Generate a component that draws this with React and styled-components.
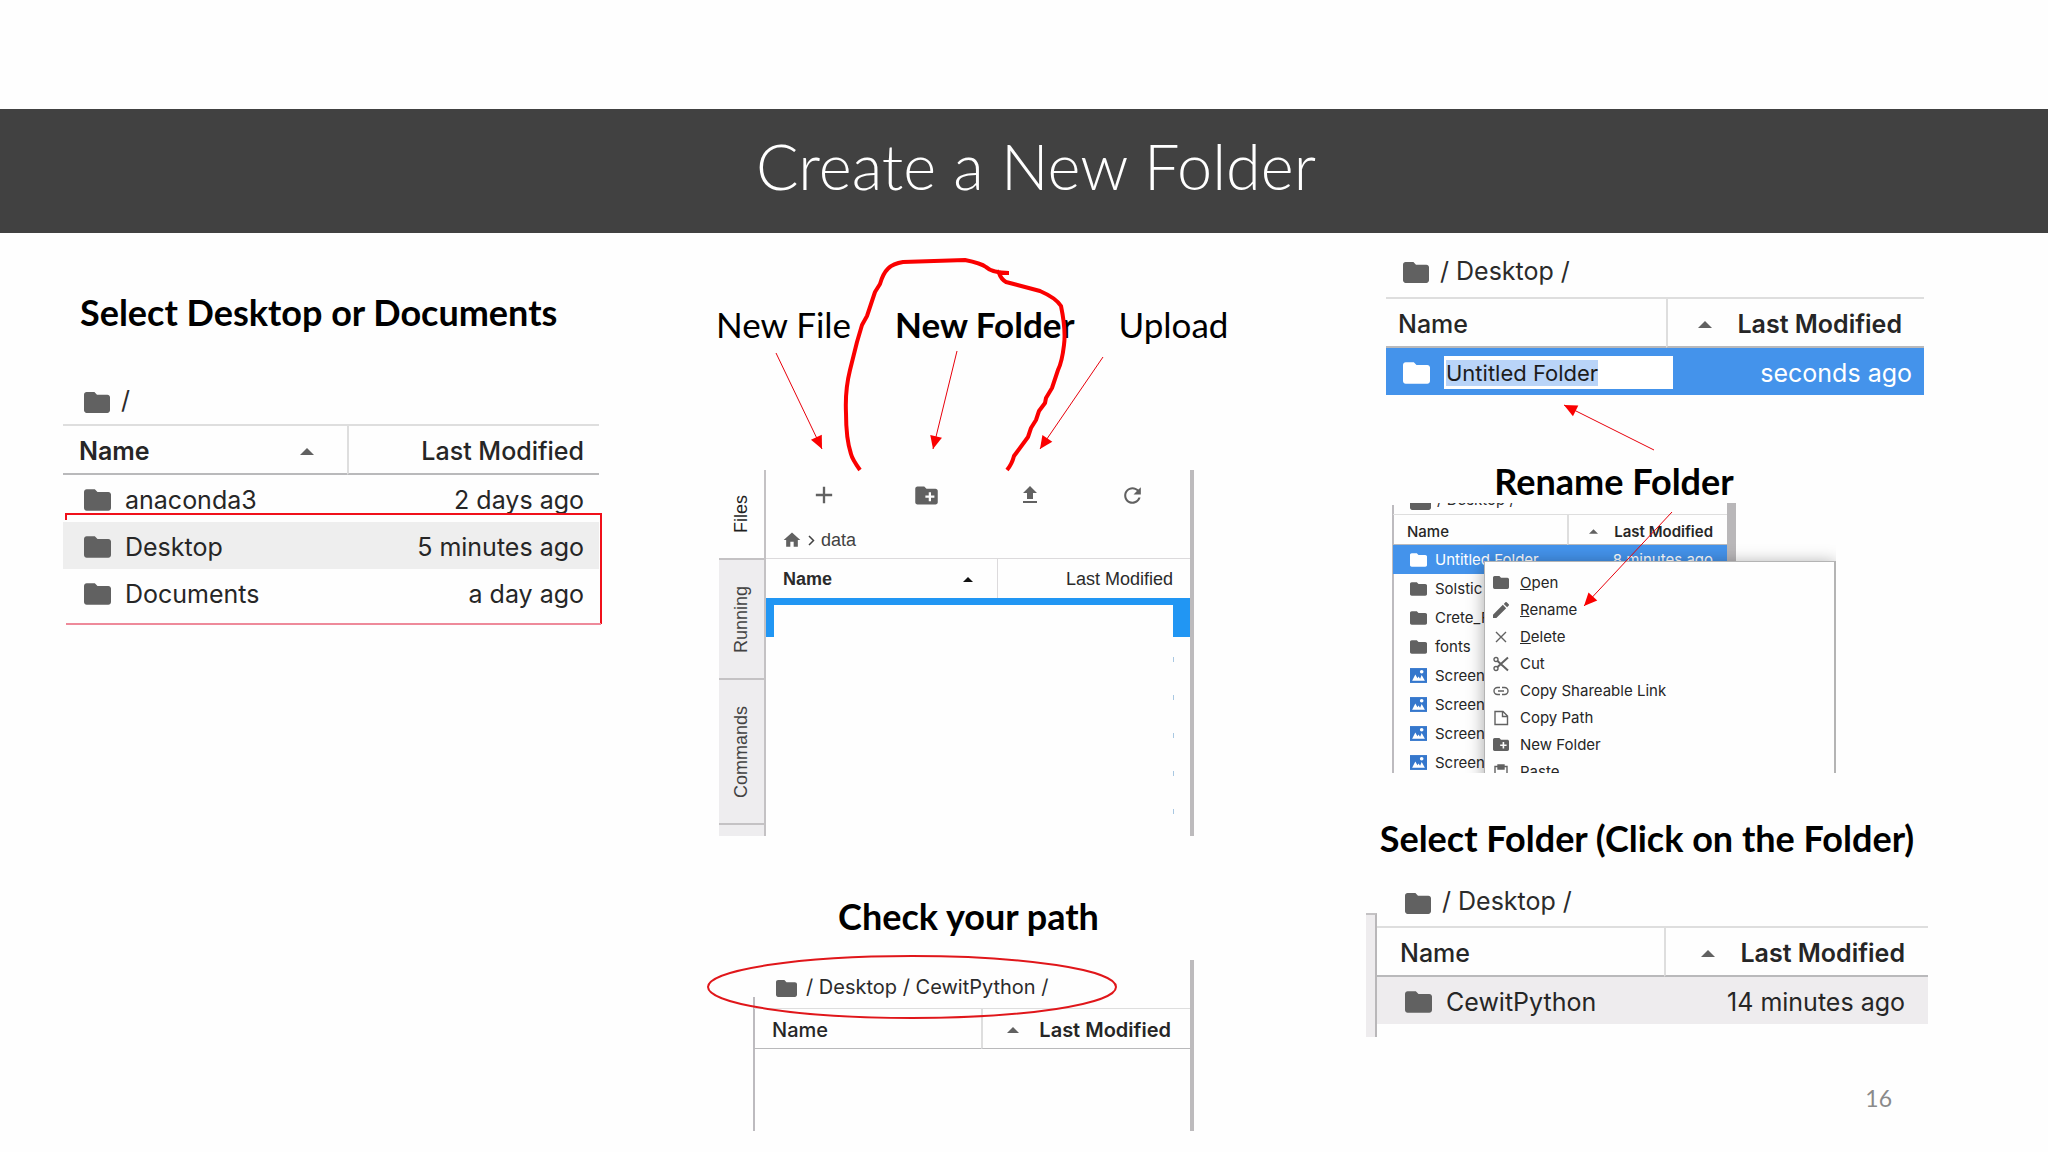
import { useEffect, useRef } from 'react';
import styled, { createGlobalStyle } from 'styled-components';

const GlobalStyle = createGlobalStyle`
    * {
        box-sizing: border-box;
    }
    body {
        margin: 0;
        background-color: #fefefe;
    }
`;

const slideFont = "Lato, 'Open Sans', sans-serif";
const uiFont = "Inter, 'Liberation Sans', sans-serif";
const oldUiFont = "'Liberation Sans', Arial, sans-serif";

const sizes = {
    large: { font: 25, head: 51, row: 47, pad: 2, icon: 27, gap: 14, line: 2, caret: 14, caretGap: 25 },
    medium: { font: 20, head: 41, row: 39, pad: 2, icon: 21, gap: 9, line: 1, caret: 12, caretGap: 20 },
    small: { font: 15, head: 31, row: 29, pad: 0, icon: 17, gap: 8, line: 1, caret: 9, caretGap: 16 },
};

const Slide = styled.div`
    padding-top: 109px;
    min-height: 100vh;
    font-family: ${slideFont};
    color: #000;
`;

const Banner = styled.header`
    height: 124px;
    padding: 0 0 10px 24px;
    display: flex;
    align-items: center;
    justify-content: center;
    background-color: #414141;
`;

const Title = styled.h1`
    margin: 0;
    font-size: 63px;
    font-weight: 300;
    line-height: 72px;
    color: #fff;
`;

const Columns = styled.main`
    display: grid;
    grid-template-columns: 540fr 523fr 594fr;
    column-gap: 104px;
    padding: 0 120px 0 63px;
`;

const Column = styled.section`
    position: relative;
    min-width: 0;
    padding-top: ${(props) => props.$top}px;
    padding-left: ${(props) => props.$left || 0}px;
`;

const Heading = styled.h2`
    margin: 0;
    padding-left: ${(props) => props.$left || 0}px;
    font-size: 36px;
    font-weight: 700;
    line-height: 44px;
    text-align: ${(props) => props.$align || 'left'};
    white-space: nowrap;
`;

const Marks = styled.svg`
    position: absolute;
    top: 0;
    left: 0;
    overflow: visible;
    pointer-events: none;
`;

const Labels = styled.div`
    display: flex;
    gap: 44px;
    padding-left: 9px;
`;

const Label = styled.span`
    font-size: 35px;
    font-weight: ${(props) => (props.$bold ? 700 : 400)};
    line-height: 44px;
    white-space: nowrap;
`;

const Crumbs = styled.nav`
    display: flex;
    align-items: center;
    gap: ${(props) => props.$gap}px;
    height: ${(props) => props.$height}px;
    padding-left: ${(props) => props.$left}px;
    font-family: ${uiFont};
    font-size: ${(props) => props.$font}px;
    color: #2b2b2b;
    white-space: nowrap;
`;

const CrumbText = styled.span`
    padding-bottom: 4px;
`;

const CrumbLink = styled.a`
    color: inherit;
    text-decoration: none;
`;

const Table = styled.table`
    width: 100%;
    table-layout: fixed;
    border-spacing: 0;
    font-family: ${uiFont};
    font-size: ${(props) => props.$size.font}px;
    color: #262626;
`;

const HeadCell = styled.th`
    width: ${(props) => props.$width || 'auto'};
    height: ${(props) => props.$size.head}px;
    padding: 3px ${(props) => props.$right || 0}px 0 ${(props) => props.$left || 0}px;
    border-top: ${(props) => props.$size.line}px solid #dedede;
    border-bottom: ${(props) => props.$size.line}px solid #b9b9bb;
    border-left: ${(props) => (props.$divided ? '2px solid #dedede' : 'none')};
    font-weight: ${(props) => (props.$bold ? 600 : 500)};
    white-space: nowrap;
`;

const HeadInner = styled.div`
    display: flex;
    align-items: center;
    justify-content: ${(props) => props.$justify};
    gap: ${(props) => props.$gap}px;
`;

const Row = styled.tr`
    background-color: ${(props) => props.$fill || 'transparent'};
    color: ${(props) => props.$color || 'inherit'};
`;

const Cell = styled.td`
    height: ${(props) => props.$size.row}px;
    padding: ${(props) => props.$size.pad}px ${(props) => props.$right || 0}px 0
        ${(props) => props.$left || 0}px;
    text-align: ${(props) => props.$align || 'left'};
    white-space: nowrap;
`;

const FileName = styled.div`
    display: flex;
    align-items: center;
    gap: ${(props) => props.$gap}px;

    svg {
        flex-shrink: 0;
    }
`;

const RenameInput = styled.input`
    width: 229px;
    height: 33px;
    padding: 0 2px;
    border: none;
    outline: none;
    background-color: #fff;
    font-family: ${uiFont};
    font-size: 22px;
    color: #1c1c1c;

    &::selection {
        background-color: #b9d4f8;
        color: #1c1c1c;
    }
`;

const HomePanel = styled.div`
    margin: 46px 4px 0 0;
`;

const LabPanel = styled.div`
    display: flex;
    height: 366px;
    margin: 124px 36px 58px 12px;
    border-right: 4px solid #bdbbbd;
    font-family: ${oldUiFont};
    font-size: 18px;
    color: #424242;
`;

const SideTabs = styled.div`
    display: flex;
    flex-direction: column;
    width: 47px;
    background-color: #eeedef;
    border-right: 2px solid #c4c2c4;
`;

// The half turn makes the top border of a tab its lower edge
const SideTab = styled.button`
    height: ${(props) => props.$height}px;
    padding: 0;
    display: flex;
    align-items: center;
    justify-content: center;
    border: none;
    border-top: 2px solid #c4c2c4;
    background-color: ${(props) => (props.$active ? '#fefefe' : 'transparent')};
    font: inherit;
    line-height: 45px;
    color: ${(props) => (props.$active ? '#1f1f1f' : '#424242')};
    writing-mode: vertical-rl;
    transform: rotate(180deg);
`;

const LabContent = styled.div`
    flex: 1;
    min-width: 0;
`;

const Toolbar = styled.div`
    display: grid;
    grid-template-columns: repeat(4, 1fr);
    height: 50px;
    padding: 0 6px;
`;

const ToolButton = styled.button`
    display: flex;
    align-items: center;
    justify-content: center;
    padding: 0;
    border: none;
    background: none;
    color: #616161;
`;

const LabCrumbs = styled.nav`
    display: flex;
    align-items: center;
    gap: 6px;
    height: 38px;
    padding: 2px 0 0 16px;
`;

const LabTable = styled.table`
    width: 100%;
    table-layout: fixed;
    border-spacing: 0;
`;

const LabHead = styled.th`
    width: ${(props) => props.$width || 'auto'};
    height: 40px;
    padding: 2px ${(props) => (props.$divided ? 17 : 24)}px 0 17px;
    border-top: 1px solid #dcdadc;
    border-left: ${(props) => (props.$divided ? '1px solid #dcdadc' : 'none')};
    font-weight: ${(props) => (props.$divided ? 400 : 700)};
    text-align: ${(props) => (props.$divided ? 'right' : 'left')};
    color: #2b2b2b;
`;

const SelectedRow = styled.div`
    height: 39px;
    border: solid #2196f3;
    border-width: 7px 17px 0 8px;
`;

const RowEdges = styled.div`
    display: flex;
    flex-direction: column;
    align-items: flex-end;
    gap: 33px;
    padding: 20px 16px 0 0;
`;

const RowEdge = styled.span`
    width: 1px;
    height: 5px;
    background-color: #a9c8e2;
`;

const PathPanel = styled.div`
    height: 171px;
    margin: 22px 36px 0 46px;
    padding: 9px 0 0 1px;
    border-right: 4px solid #bdbbbd;
    background: linear-gradient(#bdbbbf, #bdbbbf) left bottom / 2px 134px no-repeat;
`;

const RenamePanel = styled.div`
    margin: 0 4px 64px 20px;
`;

const ContextFigure = styled.div`
    margin: 0 92px 43px 26px;
`;

const ContextCrop = styled.div`
    position: relative;
    height: 270px;
    overflow: hidden;
`;

const ContextPanel = styled.div`
    height: 270px;
    margin-right: 100px;
    padding-left: 1px;
    overflow: hidden;
    border-right: 9px solid #b9b7b9;
    background: linear-gradient(#bdbbbf, #bdbbbf) left bottom / 2px 268px no-repeat;
`;

const ClippedCrumbs = styled.div`
    display: flex;
    align-items: flex-end;
    height: 11px;
    padding-bottom: 3px;
`;

const Menu = styled.ul`
    position: absolute;
    top: 58px;
    left: 92px;
    right: 0;
    height: 240px;
    margin: 0;
    padding: 7px 0 0;
    list-style: none;
    background-color: #fefefe;
    border: 1px solid #b4b4b4;
    border-right-width: 2px;
    box-shadow: 0 2px 16px rgba(0, 0, 0, 0.35);
`;

const MenuButton = styled.button`
    display: flex;
    align-items: center;
    gap: 11px;
    width: 100%;
    height: 27px;
    padding: 0 0 0 8px;
    border: none;
    background: none;
    font-family: ${uiFont};
    font-size: 15px;
    color: #262626;
    text-align: left;

    svg {
        color: #616161;
    }
`;

const FolderPanel = styled.div`
    display: flex;
    margin-top: 20px;
`;

const Gutter = styled.div`
    width: 11px;
    margin-top: 33px;
    background-color: #eeecee;
    border-top: 2px solid #c4c2c4;
    border-right: 2px solid #b9b7b9;
`;

const FolderContent = styled.div`
    flex: 1;
    min-width: 0;
    padding-bottom: 13px;
`;

const PageNumber = styled.footer`
    margin-top: 48px;
    padding-right: 36px;
    font-size: 23px;
    line-height: 26px;
    text-align: right;
    color: #8a8a8a;
`;

const FolderIcon = ({ width = 26, color = '#616161' }) => (
    <svg width={width} height={Math.round(width * 0.8)} viewBox='2 4 20 16' fill={color}>
        <path d='M10 4H4c-1.1 0-2 .9-2 2v12c0 1.1.9 2 2 2h16c1.1 0 2-.9 2-2V8c0-1.1-.9-2-2-2h-8l-2-2z' />
    </svg>
);

const ImageIcon = () => (
    <svg width='17' height='15' viewBox='0 0 16 14'>
        <path fill='#3577cc' d='M0 0h16v14H0z' />
        <path fill='#fff' d='M2 12l3-6 2 3.500 1-1.500 1.500 2L11 6.500 14 12z' />
        <circle cx='11' cy='3.500' r='1.700' fill='#fff' />
    </svg>
);

const Icon = ({ size, d }) => (
    <svg width={size} height={size} viewBox='0 0 24 24' fill='currentColor'>
        <path d={d} />
    </svg>
);

const LineIcon = ({ children }) => (
    <svg
        width='16'
        height='16'
        viewBox='0 0 16 16'
        fill='none'
        stroke='currentColor'
        strokeWidth='1.400'
    >
        {children}
    </svg>
);

const Caret = ({ width, color = '#616161' }) => (
    <svg width={width} height={Math.round(width / 2)} viewBox='0 0 14 7' fill={color}>
        <path d='M0 7L7 0l7 7z' />
    </svg>
);

const newFolderPath =
    'M20 6h-8l-2-2H4c-1.110 0-1.990.89-1.990 2L2 18c0 1.110.89 2 2 2h16c1.110 0 2-.89 2-2V8c0-1.110-.89-2-2-2zm-1 8h-3v3h-2v-3h-3v-2h3V9h2v3h3v2z';

const tools = [
    { name: 'New File', size: 28, d: 'M19 13h-6v6h-2v-6H5v-2h6V5h2v6h6v2z' },
    { name: 'New Folder', size: 27, d: newFolderPath },
    { name: 'Upload', size: 24, d: 'M9 16h6v-6h4l-7-7-7 7h4zm-4 2h14v2H5z' },
    {
        name: 'Refresh',
        size: 25,
        d: 'M17.650 6.350C16.200 4.900 14.210 4 12 4c-4.420 0-7.990 3.580-7.990 8s3.570 8 7.990 8c3.730 0 6.840-2.550 7.730-6h-2.080c-.82 2.330-3.040 4-5.650 4-3.310 0-6-2.690-6-6s2.690-6 6-6c1.660 0 3.140.69 4.220 1.780L13 11h7V4l-2.350 2.350z',
    },
];

const menuItems = [
    { key: 'O', text: 'pen', icon: <FolderIcon width={16} /> },
    {
        key: 'R',
        text: 'ename',
        icon: (
            <svg width='16' height='16' viewBox='3 3 18 18' fill='currentColor'>
                <path d='M3 17.250V21h3.750L17.810 9.940l-3.750-3.750L3 17.250zM20.710 7.040a1 1 0 0 0 0-1.410l-2.340-2.340a1 1 0 0 0-1.410 0l-1.830 1.830 3.750 3.750 1.830-1.830z' />
            </svg>
        ),
    },
    {
        key: 'D',
        text: 'elete',
        icon: (
            <LineIcon>
                <path d='M3 3l10 10M13 3L3 13' />
            </LineIcon>
        ),
    },
    {
        text: 'Cut',
        icon: (
            <LineIcon>
                <circle cx='3' cy='3.500' r='2' />
                <circle cx='3' cy='12.500' r='2' />
                <path d='M4.500 5L15 14.500M4.500 11L15 1.500' strokeWidth='2' />
            </LineIcon>
        ),
    },
    {
        text: 'Copy Shareable Link',
        icon: (
            <LineIcon>
                <path d='M7 4.500H4.500a3.500 3.500 0 0 0 0 7H7M9 4.500h2.500a3.500 3.500 0 0 1 0 7H9M5 8h6' />
            </LineIcon>
        ),
    },
    {
        text: 'Copy Path',
        icon: (
            <LineIcon>
                <path d='M2 1.500h8l4.500 4.500v8.500H2zM9.500 1.500v5h5' />
            </LineIcon>
        ),
    },
    {
        text: 'New Folder',
        icon: (
            <svg width='16' height='13' viewBox='2 4 20 16' fill='currentColor'>
                <path d={newFolderPath} />
            </svg>
        ),
    },
    {
        text: 'Paste',
        icon: (
            <LineIcon>
                <path d='M2 2.500h12V15H2z' />
                <path d='M5 1h6v4H5z' fill='currentColor' />
            </LineIcon>
        ),
    },
];

const contextRows = ['Solstic', 'Crete_F', 'fonts'];
const imageRows = [1, 2, 3, 4];

// Line from (x1, y1) ending in a solid head whose tip is at (x2, y2)
const Arrow = ({ x1, y1, x2, y2 }) => {
    const angle = (Math.atan2(y2 - y1, x2 - x1) * 180) / Math.PI;
    return (
        <g stroke='#e8000b' strokeWidth='1' fill='#fa0000'>
            <path d={`M${x1} ${y1}L${x2} ${y2}`} />
            <path
                d='M0 0L-13 -6L-13 6Z'
                stroke='none'
                transform={`translate(${x2} ${y2}) rotate(${angle})`}
            />
        </g>
    );
};

const TableHead = ({ size, split = '52%', left, right, sortByName }) => (
    <thead>
        <tr>
            <HeadCell
                $size={size}
                $width={split}
                $left={left}
                $right={sortByName ? 33 : 0}
                $bold={sortByName}
            >
                <HeadInner $justify='space-between'>
                    Name
                    {sortByName && <Caret width={size.caret} />}
                </HeadInner>
            </HeadCell>
            <HeadCell $size={size} $right={right} $bold={!sortByName} $divided>
                <HeadInner $justify='flex-end' $gap={size.caretGap}>
                    {!sortByName && <Caret width={size.caret} />}
                    Last Modified
                </HeadInner>
            </HeadCell>
        </tr>
    </thead>
);

const FileRow = ({ size, left, right, name, time, icon, fill, color }) => (
    <Row $fill={fill} $color={color}>
        <Cell $size={size} $left={left}>
            <FileName $gap={size.gap}>
                {icon || <FolderIcon width={size.icon} color={color} />}
                {name}
            </FileName>
        </Cell>
        <Cell $size={size} $right={right} $align='right'>
            {time}
        </Cell>
    </Row>
);

const Path = ({ parts, ...props }) => (
    <Crumbs {...props}>
        <FolderIcon width={props.$font > 20 ? 26 : 21} />
        <CrumbText>
            /{' '}
            {parts.map((part) => (
                <span key={part}>
                    <CrumbLink href='#'>{part}</CrumbLink> /{' '}
                </span>
            ))}
        </CrumbText>
    </Crumbs>
);

const App = () => {
    const nameInput = useRef(null);

    useEffect(() => {
        nameInput.current.focus();
        nameInput.current.select();
    }, []);

    const { large, medium, small } = sizes;

    return (
        <Slide>
            <GlobalStyle />
            <Banner>
                <Title>Create a New Folder</Title>
            </Banner>
            <Columns>
                <Column $top={57}>
                    <Heading $left={17}>Select Desktop or Documents</Heading>
                    <HomePanel>
                        <Path parts={[]} $font={25} $gap={11} $height={44} $left={21} />
                        <Table $size={large}>
                            <TableHead size={large} split='53%' left={16} right={15} sortByName />
                            <tbody>
                                <FileRow size={large} left={21} right={15} name='anaconda3' time='2 days ago' />
                                <FileRow
                                    size={large}
                                    left={21}
                                    right={15}
                                    name='Desktop'
                                    time='5 minutes ago'
                                    fill='#eeeeee'
                                />
                                <FileRow size={large} left={21} right={15} name='Documents' time='a day ago' />
                            </tbody>
                        </Table>
                    </HomePanel>
                    <Marks width='540' height='400' fill='none' strokeWidth='2'>
                        <path stroke='#f0101a' d='M3 287V281H538V391' />
                        <path stroke='#ee8a9a' d='M3 391H538' />
                    </Marks>
                </Column>

                <Column $top={69}>
                    <Labels>
                        <Label>New File</Label>
                        <Label $bold>New Folder</Label>
                        <Label>Upload</Label>
                    </Labels>
                    <LabPanel>
                        <SideTabs>
                            <SideTab $height={90} $active>Files</SideTab>
                            <SideTab $height={120}>Running</SideTab>
                            <SideTab $height={145}>Commands</SideTab>
                        </SideTabs>
                        <LabContent>
                            <Toolbar>
                                {tools.map((tool) => (
                                    <ToolButton key={tool.name} aria-label={tool.name}>
                                        <Icon size={tool.size} d={tool.d} />
                                    </ToolButton>
                                ))}
                            </Toolbar>
                            <LabCrumbs>
                                <svg width='20' height='20' viewBox='0 0 24 24' fill='#616161'>
                                    <path d='M10 20v-6h4v6h5v-8h3L12 3 2 12h3v8z' />
                                </svg>
                                <svg width='7' height='11' viewBox='0 0 7 11' fill='none' stroke='#424242' strokeWidth='1.500'>
                                    <path d='M1 1l4.500 4.500L1 10' />
                                </svg>
                                <CrumbLink href='#'>data</CrumbLink>
                            </LabCrumbs>
                            <LabTable>
                                <thead>
                                    <tr>
                                        <LabHead $width='231px'>
                                            <HeadInner $justify='space-between'>
                                                Name
                                                <Caret width={10} color='#111' />
                                            </HeadInner>
                                        </LabHead>
                                        <LabHead $divided>Last Modified</LabHead>
                                    </tr>
                                </thead>
                            </LabTable>
                            <SelectedRow />
                            <RowEdges>
                                <RowEdge />
                                <RowEdge />
                                <RowEdge />
                                <RowEdge />
                                <RowEdge />
                            </RowEdges>
                        </LabContent>
                    </LabPanel>
                    <Heading $align='center'>Check your path</Heading>
                    <PathPanel>
                        <Path
                            parts={['Desktop', 'CewitPython']}
                            $font={20}
                            $gap={9}
                            $height={39}
                            $left={22}
                        />
                        <Table $size={medium}>
                            <TableHead size={medium} left={18} right={19} />
                        </Table>
                    </PathPanel>
                    <Marks width='523' height='903' viewBox='707 233 523 903' fill='none'>
                        <path
                            stroke='#fa0000'
                            strokeWidth='4'
                            strokeLinejoin='round'
                            d='M860 470C855 463 852 458 851 454C848 445 846 430 846 413C845 392 848 378 850 370L857 342L862 325L867 316L875 292L880 284C884 270 890 264 903 262L965 260C975 262 982 264 986 267Q992 273 1009 273M997 271L999 273Q1001 279 1006 282L1040 291Q1056 298 1061 306Q1066 330 1064 345Q1062 362 1058 370L1052 388L1046 398L1045 403L1039 411L1036 420L1031 428L1028 437L1014 456Q1012 464 1007 470'
                        />
                        <Arrow x1={776} y1={353} x2={822} y2={449} />
                        <Arrow x1={957} y1={351} x2={933} y2={449} />
                        <Arrow x1={1103} y1={357} x2={1040} y2={449} />
                        <ellipse cx='912' cy='987' rx='204' ry='31' stroke='#e0161a' strokeWidth='2' />
                    </Marks>
                </Column>

                <Column $top={15} $left={32}>
                    <RenamePanel>
                        <Path parts={['Desktop']} $font={25} $gap={11} $height={49} $left={17} />
                        <Table $size={large}>
                            <TableHead size={large} left={12} right={22} />
                            <tbody>
                                <FileRow
                                    size={large}
                                    left={17}
                                    right={12}
                                    name={
                                        <RenameInput
                                            ref={nameInput}
                                            aria-label='Folder name'
                                            defaultValue='Untitled Folder'
                                        />
                                    }
                                    time='seconds ago'
                                    fill='#4493eb'
                                    color='#ffffff'
                                />
                            </tbody>
                        </Table>
                    </RenamePanel>
                    <ContextFigure>
                        <Heading $align='center'>Rename Folder</Heading>
                        <ContextCrop>
                            <ContextPanel>
                                <ClippedCrumbs>
                                    <Path parts={['Desktop']} $font={15} $gap={6} $height={20} $left={17} />
                                </ClippedCrumbs>
                                <Table $size={small}>
                                    <TableHead size={small} left={14} right={14} />
                                    <tbody>
                                        <FileRow
                                            size={small}
                                            left={17}
                                            right={14}
                                            name='Untitled Folder'
                                            time='8 minutes ago'
                                            fill='#4493eb'
                                            color='#ffffff'
                                        />
                                        {contextRows.map((name) => (
                                            <FileRow key={name} size={small} left={17} name={name} />
                                        ))}
                                        {imageRows.map((id) => (
                                            <FileRow
                                                key={id}
                                                size={small}
                                                left={17}
                                                name='Screen'
                                                icon={<ImageIcon />}
                                            />
                                        ))}
                                    </tbody>
                                </Table>
                            </ContextPanel>
                            <Menu>
                                {menuItems.map((item) => (
                                    <li key={item.text}>
                                        <MenuButton>
                                            {item.icon}
                                            <span>
                                                {item.key && <u>{item.key}</u>}
                                                {item.text}
                                            </span>
                                        </MenuButton>
                                    </li>
                                ))}
                            </Menu>
                        </ContextCrop>
                    </ContextFigure>
                    <Heading $align='center'>Select Folder (Click on the Folder)</Heading>
                    <FolderPanel>
                        <Gutter />
                        <FolderContent>
                            <Path parts={['Desktop']} $font={25} $gap={11} $height={46} $left={28} />
                            <Table $size={large}>
                                <TableHead size={large} left={23} right={23} />
                                <tbody>
                                    <FileRow
                                        size={large}
                                        left={28}
                                        right={23}
                                        name='CewitPython'
                                        time='14 minutes ago'
                                        fill='#eeecee'
                                    />
                                </tbody>
                            </Table>
                        </FolderContent>
                    </FolderPanel>
                    <PageNumber>16</PageNumber>
                    <Marks width='594' height='903' viewBox='1334 233 594 903' fill='none'>
                        <Arrow x1={1654} y1={450} x2={1564} y2={405} />
                        <Arrow x1={1672} y1={512} x2={1584} y2={606} />
                    </Marks>
                </Column>
            </Columns>
        </Slide>
    );
};

export default App;
